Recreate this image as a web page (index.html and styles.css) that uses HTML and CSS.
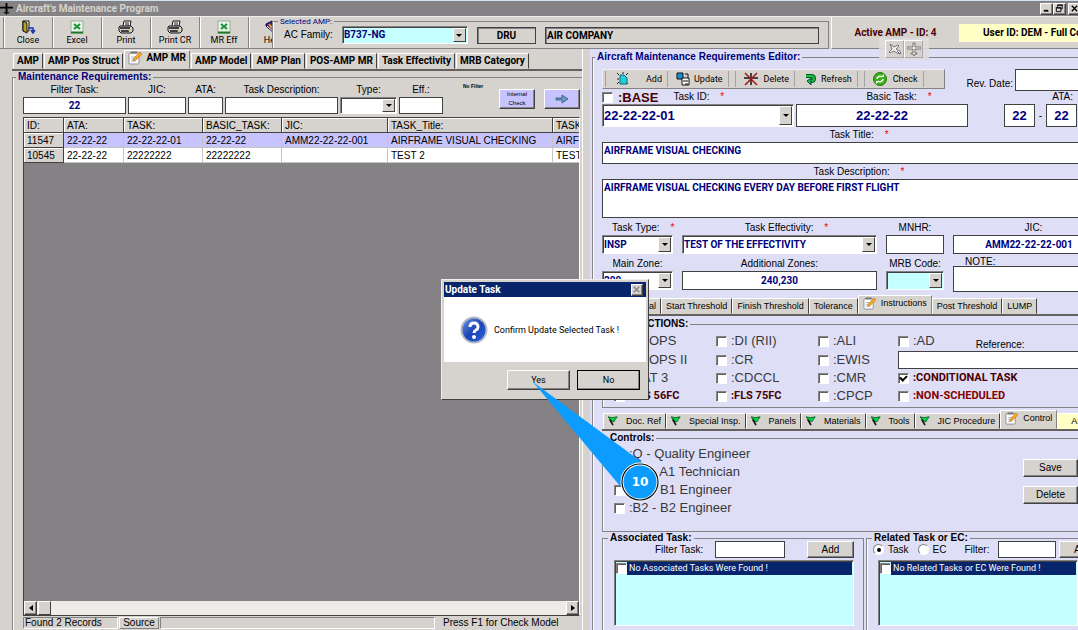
FILE: index.html
```html
<!DOCTYPE html>
<html lang="en">

<head>
  <meta charset="utf-8" />
  <meta name="viewport" content="width=device-width, initial-scale=1" />
  <title>Aircraft's Maintenance Program</title>
  <link rel="stylesheet" href="styles.css">
</head>

<body>
  <!-- shared icons -->
  <svg class="sprite" aria-hidden="true">
    <symbol id="i-note" viewBox="0 0 14 14">
      <rect x="1" y="2" width="10" height="11" rx="1" fill="#fff" stroke="#8c8c94" />
      <path d="M3 2h6v-1h-6z" fill="#777" stroke="#777" />
      <path d="M3 6h5M3 8h4M3 10h5" stroke="#a8b8d8" />
      <path d="M5 10l1-3 6-6 2 2-6 6z" fill="#f7a921" stroke="#b96a10" stroke-width=".6" />
    </symbol>
    <symbol id="i-flag" viewBox="0 0 12 12">
      <path d="M0 1l5 1 6-1-2 3-2 3-3-1z" fill="#00d840" stroke="#052" />
      <path d="M2 4l4 7" stroke="#111" stroke-width="2" />
    </symbol>
    <symbol id="i-excel" viewBox="0 0 14 14">
      <rect x="1" y="1" width="12" height="12" fill="#e8f4e8" stroke="#9ab09a" />
      <path d="M1 12.500h12" stroke="#1a7a2a" stroke-width="2" />
      <path d="M4 4l6 5M10 4l-6 5" stroke="#18913a" stroke-width="2" />
    </symbol>
    <symbol id="i-print" viewBox="0 0 16 14">
      <path d="M5 6l1-5h7l-1 5" fill="#fff" stroke="#111" />
      <path d="M7 3h4M7 5h4" stroke="#111" />
      <path d="M2 6h11l2 2v3l-2 2H3l-2-2V7z" fill="#cfcfcf" stroke="#111" />
      <path d="M2 8h10M3 11h8" stroke="#111" stroke-width="1.500" />
      <path d="M10 10h2" stroke="#e0d020" />
    </symbol>
    <symbol id="i-plane" viewBox="0 0 14 14">
      <path d="M6 1h2v4h6v2H8v4h2v1H8l-1 2-1-2H4v-1h2V7H0V5h6z" />
    </symbol>
  </svg>

  <header class="titlebar">
    <svg class="app-icon" viewBox="0 0 14 14"><use href="#i-plane" /></svg>
    <h1>Aircraft's Maintenance Program</h1>
    <div class="win-btns">
      <button type="button" aria-label="Minimize"><svg viewBox="0 0 12 10"><path d="M3 7.500h5" stroke="#000" stroke-width="2" /></svg></button>
      <button type="button" aria-label="Restore"><svg viewBox="0 0 12 10"><path d="M4 1.500h5v4h-2M4 1v3M2.500 4.500h5v4h-5zM2 4h6M4 1h6" fill="none" stroke="#000" /></svg></button>
      <button type="button" aria-label="Close"><svg viewBox="0 0 12 10"><path d="M3 2l6 6M9 2l-6 6" stroke="#000" stroke-width="1.500" /></svg></button>
    </div>
  </header>

  <div class="topbar">
    <div class="tools">
      <button type="button">
        <svg viewBox="0 0 16 14"><path d="M3 1h6v10H3z" fill="#ffe" stroke="#111" /><path d="M3 1l4 2v10l-4-2z" fill="#b8a020" stroke="#111" /><path d="M8 8h5v4M11 10l2 3 2-3" fill="none" stroke="#2038a8" stroke-width="1.500" /></svg>
        Close
      </button>
      <button type="button"><svg viewBox="0 0 14 14"><use href="#i-excel" /></svg>Excel</button>
      <button type="button"><svg viewBox="0 0 16 14"><use href="#i-print" /></svg>Print</button>
      <button type="button"><svg viewBox="0 0 16 14"><use href="#i-print" /></svg>Print CR</button>
      <button type="button"><svg viewBox="0 0 14 14"><use href="#i-excel" /></svg>MR Eff</button>
      <button type="button"><svg viewBox="0 0 16 14"><path d="M1 4l6-3 7 5-5 7-8-7z" fill="#3818a0" stroke="#111" /><path d="M2 6l7 6 4-6" fill="none" stroke="#fff" /><path d="M4 4l3 4" stroke="#f0a020" stroke-width="2" /></svg>Help</button>
    </div>
    <fieldset class="selected-amp">
      <legend>Selected AMP:</legend>
      <label for="family">AC Family:</label>
      <span class="combo cyan family"><select id="family"><option>B737-NG</option></select><i></i></span>
      <output class="amp-code">DRU</output>
      <output class="amp-company">AIR COMPANY</output>
    </fieldset>
    <div class="session">
      <span class="active-amp">Active AMP - ID: 4</span>
      <span class="user">User ID: DEM - Full Control</span>
    </div>
  </div>

  <div class="float-tools">
    <button type="button" aria-label="Aircraft"><svg viewBox="0 0 14 14"><path d="M2 2l4 3 4-2 1 1-3 3 4 2 1 3-4-1-3-2-4 2-1-1 3-3z" fill="#eee" stroke="#777" /><path d="M9 9l3 3" stroke="#56a" /></svg></button>
    <button type="button" aria-label="Aircraft position"><svg viewBox="0 0 14 14" fill="#eee" stroke="#777"><use href="#i-plane" /></svg></button>
  </div>

  <main class="main">
    <section class="left">
      <nav class="tabs main-tabs">
        <a href="#">AMP</a>
        <a href="#">AMP Pos Struct</a>
        <a href="#" class="active"><svg viewBox="0 0 14 14"><use href="#i-note" /></svg>AMP MR</a>
        <a href="#">AMP Model</a>
        <a href="#">AMP Plan</a>
        <a href="#">POS-AMP MR</a>
        <a href="#">Task Effectivity</a>
        <a href="#">MRB Category</a>
      </nav>

      <fieldset class="requirements">
        <legend>Maintenance Requirements:</legend>
        <div class="filters">
          <div class="field f-task"><label for="f-task">Filter Task:</label><input id="f-task" value="22"></div>
          <div class="field f-jic"><label for="f-jic">JIC:</label><input id="f-jic"></div>
          <div class="field f-ata"><label for="f-ata">ATA:</label><input id="f-ata"></div>
          <div class="field f-desc"><label for="f-desc">Task Description:</label><input id="f-desc"></div>
          <div class="field f-type"><label for="f-type">Type:</label><span class="combo"><select id="f-type"><option></option></select><i></i></span></div>
          <div class="field f-eff"><label for="f-eff">Eff.:</label><input id="f-eff"></div>
          <span class="no-filter">No Filter</span>
          <button type="button" class="lilac">Internal Check</button>
          <button type="button" class="lilac" aria-label="Next"><svg viewBox="0 0 14 10"><path d="M1 4h6V1l6 4-6 4V6H1z" fill="#6b96c0" stroke="#44688c" /></svg></button>
        </div>

        <div class="grid">
          <div class="grid-view">
            <table>
              <thead>
                <tr><th class="c-id">ID:</th><th class="c-ata">ATA:</th><th class="c-task">TASK:</th><th class="c-task">BASIC_TASK:</th><th class="c-jic">JIC:</th><th class="c-title">TASK_Title:</th><th class="c-desc">TASK_Desc:</th></tr>
              </thead>
              <tbody>
                <tr class="selected"><th>11547</th><td>22-22-22</td><td>22-22-22-01</td><td>22-22-22</td><td>AMM22-22-22-001</td><td>AIRFRAME VISUAL CHECKING</td><td>AIRFRAME</td></tr>
                <tr><th>10545</th><td>22-22-22</td><td>22222222</td><td>22222222</td><td></td><td>TEST 2</td><td>TEST 2</td></tr>
              </tbody>
            </table>
          </div>
          <div class="hscroll">
            <button type="button" aria-label="Scroll left"><svg viewBox="0 0 6 8"><path d="M5 1v6L1 4z" /></svg></button>
            <span class="thumb"></span>
            <button type="button" aria-label="Scroll right"><svg viewBox="0 0 6 8"><path d="M1 1v6l4-3z" /></svg></button>
          </div>
        </div>

        <footer class="status">
          <span class="records">Found 2 Records</span>
          <button type="button">Source</button>
          <span class="message"></span>
          <span class="hint">Press F1 for Check Model</span>
        </footer>
      </fieldset>
    </section>

    <section class="right">
      <fieldset class="editor">
        <legend>Aircraft Maintenance Requirements Editor:</legend>

        <div class="row editor-head">
          <div class="toolbar">
            <button type="button" class="t-add"><svg viewBox="0 0 14 14"><path d="M1 1l2 2M7 0v2M12 1l-2 2M1 7h2M1 12l2-2M12 12l-2-2" stroke="#222" /><path d="M4 3h4l3 3v6H4z" fill="#20d0e0" stroke="#167" /></svg>Add</button>
            <button type="button"><svg viewBox="0 0 14 14"><path d="M1 1h6v6H1z" fill="#1890d8" stroke="#111" /><path d="M6 6h7v7H6z" fill="#fff" stroke="#111" /><path d="M9 2h3v4M7 9h5M9 12h3" fill="none" stroke="#111" /></svg>Update</button>
            <button type="button" class="group"><svg viewBox="0 0 14 14"><path d="M6 1h2v4h6v2H8v6H6V7H0V5h6z" fill="#444" /><path d="M1 1l12 12M13 1L1 13" stroke="#a01818" stroke-width="1.500" /></svg>Delete</button>
            <button type="button"><svg viewBox="0 0 14 14"><path d="M3 4h5q3 0 3 2.500t-3 2.500H7" fill="none" stroke="#053" stroke-width="4" /><path d="M3 4h5q3 0 3 2.500t-3 2.500H7" fill="none" stroke="#20c040" stroke-width="2" /><path d="M8 6v7L4 9z" fill="#20c040" stroke="#053" /></svg>Refresh</button>
            <button type="button" class="group"><svg viewBox="0 0 14 14"><circle cx="7" cy="7" r="6.500" fill="#38b018" stroke="#287810" /><path d="M4 7a3 3 0 0 1 5-2M10 7a3 3 0 0 1-5 2" fill="none" stroke="#fff" stroke-width="1.500" /><path d="M8 5h3V2zM6 9H3v3z" fill="#fff" /></svg>Check</button>
          </div>
          <label for="rev">Rev. Date:</label>
          <input id="rev" class="bleed">
        </div>

        <div class="row row-ids">
          <div class="field w-task-id">
            <div class="base-line"><label class="base"><input type="checkbox">:BASE</label><label for="task-id">Task ID: <b>*</b></label></div>
            <span class="combo big"><select id="task-id"><option>22-22-22-01</option></select><i></i></span>
          </div>
          <div class="field w-basic"><label for="basic">Basic Task: <b>*</b></label><input id="basic" class="big" value="22-22-22"></div>
          <div class="field w-ata"><label for="ata2">ATA:</label>
            <div class="ata-pair"><input class="big" aria-label="ATA chapter" value="22"><span>-</span><input id="ata2" class="big" value="22"></div>
          </div>
        </div>

        <div class="field wide"><label for="title">Task Title: <b>*</b></label><textarea id="title" class="bleed title">AIRFRAME VISUAL CHECKING</textarea></div>
        <div class="field wide"><label for="desc">Task Description: <b>*</b></label><textarea id="desc" class="bleed desc">AIRFRAME VISUAL CHECKING EVERY DAY BEFORE FIRST FLIGHT</textarea></div>

        <div class="quad">
          <div class="field type"><label for="type">Task Type: <b>*</b></label><span class="combo"><select id="type"><option>INSP</option></select><i></i></span></div>
          <div class="field effect"><label for="effect">Task Effectivity: <b>*</b></label><span class="combo"><select id="effect"><option>TEST OF THE EFFECTIVITY</option></select><i></i></span></div>
          <div class="field"><label for="mnhr">MNHR:</label><input id="mnhr"></div>
          <div class="field jic"><label for="jic">JIC:</label><input id="jic" class="bleed" value="AMM22-22-22-001"></div>
          <div class="field"><label for="zone">Main Zone:</label><span class="combo"><select id="zone"><option>200</option></select><i></i></span></div>
          <div class="field"><label for="zones">Additional Zones:</label><input id="zones" value="240,230"></div>
          <div class="field"><label for="mrb">MRB Code:</label><span class="combo cyan"><select id="mrb"><option></option></select><i></i></span></div>
          <div class="field note"><label for="note">NOTE:</label><textarea id="note" class="bleed"></textarea></div>
        </div>

        <nav class="tabs sub-tabs first">
          <a href="#">Interval</a>
          <a href="#">Start Threshold</a>
          <a href="#">Finish Threshold</a>
          <a href="#">Tolerance</a>
          <a href="#" class="active"><svg viewBox="0 0 14 14"><use href="#i-note" /></svg>Instructions</a>
          <a href="#">Post Threshold</a>
          <a href="#">LUMP</a>
        </nav>

        <fieldset class="instructions">
          <legend>INSTRUCTIONS:</legend>
          <label class="check"><input type="checkbox">:ETOPS</label>
          <label class="check"><input type="checkbox">:DI (RII)</label>
          <label class="check"><input type="checkbox">:ALI</label>
          <div class="ad"><label class="check"><input type="checkbox">:AD</label><label for="ref" class="ref-label">Reference:</label></div>
          <label class="check"><input type="checkbox">:ETOPS II</label>
          <label class="check"><input type="checkbox">:CR</label>
          <label class="check"><input type="checkbox">:EWIS</label>
          <input id="ref" class="bleed">
          <label class="check"><input type="checkbox">:CAT 3</label>
          <label class="check"><input type="checkbox">:CDCCL</label>
          <label class="check"><input type="checkbox">:CMR</label>
          <label class="check strong"><input type="checkbox" checked>:CONDITIONAL TASK</label>
          <label class="check strong"><input type="checkbox">:FLS 56FC</label>
          <label class="check strong"><input type="checkbox">:FLS 75FC</label>
          <label class="check"><input type="checkbox">:CPCP</label>
          <label class="check strong red"><input type="checkbox">:NON-SCHEDULED</label>
        </fieldset>

        <nav class="tabs sub-tabs second">
          <a href="#"><svg viewBox="0 0 12 12"><use href="#i-flag" /></svg>Doc. Ref</a>
          <a href="#"><svg viewBox="0 0 12 12"><use href="#i-flag" /></svg>Special Insp.</a>
          <a href="#"><svg viewBox="0 0 12 12"><use href="#i-flag" /></svg>Panels</a>
          <a href="#"><svg viewBox="0 0 12 12"><use href="#i-flag" /></svg>Materials</a>
          <a href="#"><svg viewBox="0 0 12 12"><use href="#i-flag" /></svg>Tools</a>
          <a href="#"><svg viewBox="0 0 12 12"><use href="#i-flag" /></svg>JIC Procedure</a>
          <a href="#" class="active"><svg viewBox="0 0 14 14"><use href="#i-note" /></svg>Control</a>
          <a href="#" class="yellow">AMP</a>
        </nav>

        <fieldset class="controls">
          <legend>Controls:</legend>
          <div class="skills">
            <label class="check"><input type="checkbox">:Q - Quality Engineer</label>
            <label class="check"><input type="checkbox">:A1 - A1 Technician</label>
            <label class="check"><input type="checkbox">:B1 - B1 Engineer</label>
            <label class="check"><input type="checkbox">:B2 - B2 Engineer</label>
          </div>
          <div class="actions">
            <button type="button">Save</button>
            <button type="button">Delete</button>
          </div>
        </fieldset>

        <div class="links">
          <fieldset class="associated">
            <legend>Associated Task:</legend>
            <div class="link-filter">
              <label for="assoc">Filter Task:</label><input id="assoc"><button type="button">Add</button>
            </div>
            <div class="list"><label><input type="checkbox"><span>No Associated Tasks Were Found !</span></label></div>
          </fieldset>
          <fieldset class="related">
            <legend>Related Task or EC:</legend>
            <div class="link-filter">
              <label class="radio"><input type="radio" name="kind" checked>Task</label>
              <label class="radio"><input type="radio" name="kind">EC</label>
              <label for="rel">Filter:</label><input id="rel"><button type="button">Add</button>
            </div>
            <div class="list"><label><input type="checkbox"><span>No Related Tasks or EC Were Found !</span></label></div>
          </fieldset>
        </div>
      </fieldset>
    </section>
  </main>

  <div class="dialog" role="dialog" aria-labelledby="dialog-title">
    <div class="dialog-title">
      <h2 id="dialog-title">Update Task</h2>
      <button type="button" aria-label="Close"><svg viewBox="0 0 10 10"><path d="M2 2l6 6M8 2l-6 6" stroke="#848284" stroke-width="1.500" /></svg></button>
    </div>
    <div class="dialog-body">
      <svg viewBox="0 0 28 28">
        <defs>
          <linearGradient id="ball" x2="1" y2="1">
            <stop stop-color="#6d96e8" />
            <stop offset=".5" stop-color="#1c45b8" />
            <stop offset="1" stop-color="#2b66dc" />
          </linearGradient>
        </defs>
        <circle cx="14" cy="14" r="12.500" fill="url(#ball)" stroke="#b4b8c4" stroke-width="2" />
        <path d="M10 11q0-4 4-4t4 4q0 2-2 3t-2 3" fill="none" stroke="#fff" stroke-width="3" />
        <circle cx="14" cy="21" r="2" fill="#fff" />
      </svg>
      <p>Confirm Update Selected Task !</p>
    </div>
    <div class="dialog-foot">
      <button type="button">Yes</button>
      <button type="button" class="default">No</button>
    </div>
  </div>

  <div class="callout">
    <svg viewBox="0 0 128 120">
      <path d="M0 0L110 81L87 104z" fill="#0c9cff" />
      <circle cx="107" cy="100" r="18" fill="#0c9cff" stroke="#fff" stroke-width="3" />
      <circle cx="107" cy="100" r="18" fill="none" stroke="#111" stroke-width="1.200" />
    </svg>
    <span>10</span>
  </div>
</body>

</html>
```
FILE: styles.css
```css
:root {
  --face: #d6d3ce;
  --panel: #dedff7;
  --dark: #424142;
  --shade: #848284;
  --navy: #00007b;
  --title: #08246b;
  --lilac: #c6c3ff;
  --cyan: #c6ffff;
  --yellow: #ffffc6;
}

* {
  box-sizing: border-box;
}

html,
body {
  height: 100%;
  margin: 0;
}

body {
  display: flex;
  flex-direction: column;
  overflow: hidden;
  position: relative;
  background: var(--face);
  color: #000;
  font: 10px/12px "Liberation Sans", Arial, sans-serif;
}

.sprite {
  position: absolute;
  width: 0;
  height: 0;
}

fieldset {
  min-width: 0;
  margin: 0;
  padding: 0;
  border: 1px solid var(--shade);
  box-shadow: inset 1px 0 #fff;
}

legend {
  padding: 0 2px;
  font-weight: bold;
  line-height: 12px;
}

input,
select,
textarea,
button {
  margin: 0;
  padding: 0;
  border-radius: 0;
  font: inherit;
  color: inherit;
}

input,
textarea {
  min-width: 0;
  border: 1px solid var(--dark);
  background: #fff;
  color: var(--navy);
  font: bold 10px/12px Roboto, sans-serif;
}

input {
  text-align: center;
}

textarea {
  display: block;
  resize: none;
  overflow: hidden;
}

.bleed {
  border-right: 0;
}

input[type="checkbox"] {
  appearance: none;
  flex: none;
  display: grid;
  place-content: center;
  width: 11px;
  height: 11px;
  border: 1px solid;
  border-color: var(--shade) #fff #fff var(--shade);
  box-shadow: inset 1px 1px #63605e;
}

input[type="checkbox"]:checked::before {
  content: "";
  width: 3px;
  height: 5px;
  margin-top: -1px;
  border: solid #000;
  border-width: 0 2px 2px 0;
  transform: rotate(45deg);
}

input[type="radio"] {
  appearance: none;
  display: grid;
  place-content: center;
  width: 11px;
  height: 11px;
  border: 1px solid;
  border-color: var(--shade) #fff #fff var(--shade);
  border-radius: 50%;
}

input[type="radio"]:checked::before {
  content: "";
  width: 4px;
  height: 4px;
  border-radius: 50%;
  background: #000;
}

button {
  border: 1px solid;
  border-color: #fff var(--dark) var(--dark) #fff;
  box-shadow: inset -1px -1px var(--shade);
  background: var(--face);
}

.combo {
  display: flex;
  height: 18px;
  padding: 1px;
  border: 1px solid;
  border-color: var(--shade) #fff #fff var(--shade);
  box-shadow: inset 1px 1px var(--dark);
  background: #fff;
}

.combo select {
  appearance: none;
  flex: 1;
  min-width: 0;
  border: 0;
  background: none;
  color: var(--navy);
  font: bold 10px/12px Roboto, sans-serif;
}

.combo i {
  display: grid;
  place-content: center;
  width: 13px;
  border: 1px solid;
  border-color: #fff var(--dark) var(--dark) #fff;
  background: var(--face);
}

.combo i::before {
  content: "";
  border: 3px solid transparent;
  border-top-color: #000;
  border-bottom: 0;
}

.combo.cyan {
  background: var(--cyan);
}

/* title bar */

.titlebar {
  flex: none;
  display: flex;
  align-items: center;
  height: 17px;
  border-top: 1px solid #cee3ef;
  border-bottom: 1px solid #efefef;
  background: var(--shade);
}

.titlebar h1 {
  flex: 1;
  margin: 0;
  padding-left: 3px;
  color: var(--face);
  font: bold 10px/14px Roboto, sans-serif;
}

.app-icon {
  width: 13px;
  height: 13px;
}

.win-btns {
  display: flex;
  margin-right: -3px;
}

.win-btns button {
  width: 13px;
  height: 12px;
}

.win-btns button:last-child {
  margin-left: 2px;
}

.win-btns svg {
  display: block;
  width: 11px;
  height: 9px;
}

/* top bar */

.topbar {
  flex: none;
  display: grid;
  grid-template-columns: 272px minmax(0, 1fr) 247px;
  height: 32px;
}

.tools {
  display: flex;
  overflow: hidden;
  padding-left: 3px;
  border-bottom: 1px solid var(--shade);
}

.tools button {
  flex: 0 0 49px;
  display: flex;
  flex-direction: column;
  align-items: center;
  justify-content: center;
  gap: 1px;
  border: 0;
  border-left: 1px solid var(--shade);
  box-shadow: inset 1px 0 #fff;
  font: 9px/11px Roboto, sans-serif;
}

.tools svg {
  width: 16px;
  height: 14px;
}

.selected-amp {
  position: relative;
  display: flex;
  align-items: center;
  gap: 0 9px;
  height: 28px;
  margin: 4px 2px 0 0;
  padding: 0 9px 0 11px;
}

.selected-amp legend {
  position: absolute;
  top: -5px;
  left: 5px;
  background: var(--face);
  color: var(--navy);
  font: 8px/10px Roboto, sans-serif;
}

.family {
  width: 126px;
}

.selected-amp output {
  height: 17px;
  border: 1px solid var(--dark);
  box-shadow: inset 1px 1px var(--shade);
  font: bold 10px/15px Roboto, sans-serif;
}

.amp-code {
  width: 59px;
  text-align: center;
}

.amp-company {
  flex: 1;
  padding-left: 1px;
}

.session {
  display: flex;
  align-items: center;
  overflow: hidden;
  border-left: 1px solid #fff;
  border-bottom: 1px solid var(--shade);
  font: bold 10px/18px Roboto, sans-serif;
}

.active-amp {
  flex: 0 0 127px;
  text-align: center;
  color: #4a0000;
}

.user {
  flex: 1;
  padding-left: 24px;
  background: var(--yellow);
  white-space: nowrap;
}

.float-tools {
  position: absolute;
  z-index: 1;
  left: 879px;
  top: 38px;
  display: flex;
  padding: 2px 6px;
  background: rgba(222, 220, 222, .9);
}

.float-tools button {
  width: 19px;
  height: 18px;
  border-color: #fff #aaa #aaa #fff;
  box-shadow: none;
}

.float-tools svg {
  display: block;
  width: 14px;
  height: 14px;
  margin: auto;
}

/* layout */

.main {
  flex: 1;
  min-height: 0;
  display: grid;
  grid-template-columns: minmax(0, 583fr) minmax(0, 488fr);
  gap: 7px;
}

.left {
  display: flex;
  flex-direction: column;
  min-height: 0;
  padding: 2px 0 0 12px;
  border-right: 1px solid #fff;
}

.right {
  overflow: hidden;
  padding: 1px 0 0 2px;
  background: var(--panel);
}

/* tabs */

.tabs {
  display: flex;
  align-items: flex-end;
  height: 20px;
  border-bottom: 2px solid #63605e;
}

.tabs a {
  display: flex;
  align-items: center;
  justify-content: center;
  height: 16px;
  padding: 0 3px;
  border: 1px solid;
  border-color: #fff var(--dark) transparent #fff;
  background: var(--face);
  color: #000;
  text-decoration: none;
  white-space: nowrap;
}

.tabs a.active {
  height: 19px;
  padding-bottom: 3px;
  border-right-color: var(--shade);
}

.main-tabs {
  gap: 1px;
  padding-left: 1px;
  font: bold 10px/12px Roboto, sans-serif;
}

.main-tabs svg {
  width: 14px;
  height: 14px;
  margin-right: 4px;
}

/* left pane */

.requirements {
  flex: 1;
  display: flex;
  flex-direction: column;
  min-height: 0;
  padding: 0 2px 0 10px;
  border-bottom: 0;
  border-right: 0;
}

.requirements legend,
.editor > legend {
  margin-left: -7px;
  color: var(--navy);
}

.field {
  display: flex;
  flex-direction: column;
  min-width: 0;
}

.field label {
  height: 13px;
  text-align: center;
  white-space: nowrap;
}

.field label b {
  padding-left: 8px;
  color: #f00000;
  font-weight: normal;
}

.filters {
  display: flex;
  gap: 2px;
  height: 34px;
  padding-top: 1px;
}

.filters .field input,
.filters .combo {
  height: 17px;
}

.f-task {
  width: 103px;
}

.f-jic {
  width: 58px;
}

.f-ata {
  width: 35px;
}

.f-desc {
  width: 113px;
}

.f-type {
  width: 57px;
}

.f-eff {
  width: 44px;
}

.no-filter {
  flex: 1;
  padding-left: 18px;
  font: bold 5px/5px "Liberation Sans", sans-serif;
}

.lilac {
  flex: 0 0 36px;
  height: 20px;
  margin: 5px 0 0 7px;
  background: var(--lilac);
  font: 6px/9px "Liberation Sans", sans-serif;
}

.lilac svg {
  display: block;
  width: 14px;
  height: 10px;
  margin: auto;
}

.grid {
  flex: 1;
  display: flex;
  flex-direction: column;
  min-height: 0;
  border: 1px solid var(--dark);
  border-right-color: #fff;
  background: var(--shade);
}

.grid-view {
  flex: 1;
  overflow: hidden;
}

.grid table {
  table-layout: fixed;
  width: 640px;
  border-collapse: separate;
  border-spacing: 0;
}

.grid th,
.grid td {
  height: 15px;
  padding: 1px 0 0 3px;
  border: solid #c6c3c6;
  border-width: 0 1px 1px 0;
  background: #fff;
  font-weight: normal;
  line-height: 13px;
  text-align: left;
  white-space: nowrap;
}

.grid th {
  border-color: var(--dark);
  box-shadow: inset 1px 1px #fff;
  background: var(--face);
}

.grid .selected td {
  background: var(--lilac);
}

.c-id {
  width: 40px;
}

.c-ata {
  width: 60px;
}

.c-task {
  width: 79px;
}

.c-jic {
  width: 106px;
}

.c-title {
  width: 165px;
}

.hscroll {
  display: flex;
  justify-content: space-between;
  height: 14px;
  background: #efebe7;
}

.hscroll button {
  width: 13px;
}

.hscroll svg {
  display: block;
  width: 6px;
  height: 8px;
  margin: auto;
}

.thumb {
  width: 13px;
  margin: 0 auto 0 1px;
  border: 1px solid;
  border-color: #fff var(--dark) var(--dark) #fff;
  background: var(--face);
}

.status {
  display: flex;
  gap: 1px;
  height: 14px;
  padding: 1px 0;
}

.status button {
  width: 40px;
  border-color: #fff var(--shade) var(--shade) #fff;
  box-shadow: none;
  line-height: 10px;
}

.records,
.message {
  width: 95px;
  padding-left: 1px;
  border: 1px solid;
  border-color: var(--shade) #fff #fff var(--shade);
  line-height: 10px;
}

.message {
  flex: 1;
}

.hint {
  flex: 0 0 144px;
  padding-left: 7px;
}

/* editor pane */

.editor {
  padding: 5px 0 0 9px;
  border-right: 0;
}

.editor > legend {
  line-height: 14px;
}

.row {
  display: flex;
}

.editor-head {
  height: 22px;
}

.editor-head > label {
  flex: 1;
  padding: 9px 2px 0 0;
  text-align: right;
  white-space: nowrap;
}

.editor-head > input {
  width: 63px;
}

.toolbar {
  display: flex;
  height: 20px;
  width: 343px;
  border: 1px solid;
  border-color: #efefef var(--shade) var(--shade) #efefef;
  background: var(--face);
}

.toolbar button {
  display: flex;
  align-items: center;
  gap: 4px;
  margin: 1px 0;
  padding: 0 5px 0 8px;
  border: 0;
  border-right: 1px solid #a5a2a5;
  box-shadow: none;
  font: 9px/12px Roboto, sans-serif;
}

.toolbar .t-add {
  gap: 16px;
  margin-left: 2px;
  padding-left: 10px;
  border-left: 1px solid #a5a2a5;
}

.toolbar .group {
  gap: 6px;
  margin-left: 6px;
  border-left: 1px solid #a5a2a5;
}

.toolbar svg {
  width: 14px;
  height: 14px;
}

.w-task-id {
  width: 192px;
}

.w-basic {
  width: 172px;
  margin-left: 2px;
}

.w-basic > label {
  padding-left: 34px;
}

.w-ata {
  width: 73px;
  margin: 0 1px 0 auto;
}

.w-ata > label {
  text-align: right;
  padding-right: 4px;
}

.base-line {
  display: flex;
  height: 13px;
}

.base-line .base {
  display: flex;
  align-items: center;
  gap: 5px;
  margin-right: 15px;
  color: #4a0000;
  font-size: 13px;
  font-weight: bold;
  line-height: 10px;
}

.row-ids .big {
  height: 23px;
}

.big,
.big select {
  font: bold 13px/16px "Liberation Sans", sans-serif;
}

.ata-pair {
  display: flex;
  align-items: center;
  justify-content: space-between;
}

.ata-pair input {
  width: 31px;
}

.wide {
  margin-top: 2px;
}

.wide label {
  padding-left: 38px;
}

.title {
  height: 22px;
}

.desc {
  height: 39px;
}

.title,
.desc {
  padding: 2px 1px;
}

.quad {
  display: grid;
  grid-template-columns: 71px 195px 58px minmax(0, 1fr);
  gap: 4px 9px;
  margin-top: 4px;
}

.quad input,
.quad .combo {
  height: 19px;
}

.type label {
  padding-left: 10px;
  text-align: left;
}

.effect label {
  padding-left: 14px;
}

.jic label {
  padding-left: 36px;
}

.jic input {
  padding-left: 26px;
}

.note label {
  height: 8px;
  padding-left: 12px;
  line-height: 8px;
  text-align: left;
}

.note textarea {
  height: 26px;
}

.sub-tabs {
  font-size: 9px;
}

.sub-tabs a {
  padding: 0 4px;
}

.sub-tabs.first {
  margin-top: 4px;
}

.sub-tabs.first a:first-child {
  width: 59px;
  justify-content: flex-end;
}

.sub-tabs.second {
  margin-top: 3px;
  padding-left: 1px;
}

.sub-tabs.first svg,
.sub-tabs.second .active svg {
  width: 13px;
  height: 13px;
  margin-right: 5px;
}

.sub-tabs.second svg {
  width: 10px;
  height: 10px;
  margin-right: 8px;
}

.tabs a.yellow {
  padding: 0 13px;
  background: var(--yellow);
}

.check {
  display: flex;
  align-items: center;
  gap: 4px;
  height: 18px;
  color: #393839;
  font-size: 13px;
  line-height: 18px;
  white-space: nowrap;
}

.check.strong {
  color: #4a0000;
  font: bold 11px/18px Roboto, sans-serif;
}

.check.red {
  color: #840000;
}

.instructions {
  display: grid;
  grid-template-columns: 102px 102px 80px minmax(0, 1fr);
  margin-top: 2px;
  padding: 2px 0 2px 11px;
  border-right: 0;
}

.instructions legend,
.controls legend,
.links legend {
  margin-left: -6px;
}

.ad {
  display: flex;
}

.ref-label {
  padding: 7px 0 0 41px;
}

.controls {
  display: flex;
  justify-content: space-between;
  height: 100px;
  margin-top: 1px;
  padding: 1px 0 0 11px;
  border-right: 0;
}

.actions {
  display: flex;
  flex-direction: column;
  gap: 9px;
  padding-top: 14px;
}

.actions button {
  width: 55px;
  height: 18px;
}

.links {
  display: grid;
  grid-template-columns: 262px minmax(0, 1fr);
  gap: 2px;
}

.links fieldset {
  height: 100px;
  padding: 0 9px 0 11px;
}

.links .related {
  padding-right: 0;
  border-right: 0;
}

.link-filter {
  display: flex;
  align-items: center;
  gap: 9px;
  height: 17px;
  margin-top: -3px;
  margin-bottom: 2px;
  white-space: nowrap;
}

.link-filter > input {
  flex: none;
  width: 70px;
  height: 17px;
}

.link-filter button {
  flex: none;
  width: 47px;
  height: 17px;
  margin-left: auto;
}

.associated .link-filter {
  gap: 12px;
  padding-left: 41px;
}

.related .link-filter {
  margin-left: -5px;
}

.related .link-filter > input {
  width: 58px;
}

.related .link-filter button {
  margin-left: -6px;
}

.radio {
  display: flex;
  align-items: center;
  gap: 4px;
}

.related label[for="rel"] {
  margin-left: 9px;
}

.list {
  height: 66px;
  border: 1px solid;
  border-color: var(--shade) #fff #fff var(--shade);
  box-shadow: inset 1px 1px var(--dark);
  padding: 1px;
  background: var(--cyan);
}

.list label {
  display: flex;
  align-items: center;
  height: 13px;
  color: #fff;
  font: 9px/13px Roboto, sans-serif;
}

.list span {
  flex: 1;
  padding-left: 2px;
  background: var(--title);
}

/* confirm dialog */

.dialog {
  position: absolute;
  z-index: 2;
  left: 441px;
  top: 279px;
  width: 208px;
  padding: 2px;
  border: 1px solid;
  border-color: #efefef var(--dark) var(--dark) #efefef;
  background: var(--face);
  font: 9px/12px Roboto, sans-serif;
}

.dialog-title {
  display: flex;
  align-items: center;
  height: 15px;
  padding: 0 3px 0 1px;
  background: var(--title);
}

.dialog-title h2 {
  flex: 1;
  margin: 0;
  color: #fff;
  font: bold 10px/14px Roboto, sans-serif;
}

.dialog-title button {
  width: 12px;
  height: 12px;
}

.dialog-title svg {
  display: block;
  width: 9px;
  height: 9px;
}

.dialog-body {
  display: flex;
  align-items: center;
  gap: 6px;
  height: 65px;
  padding-left: 16px;
  background: #fff;
}

.dialog-body svg {
  width: 28px;
  height: 28px;
}

.dialog-body p {
  margin: 0;
}

.dialog-foot {
  display: flex;
  justify-content: flex-end;
  gap: 7px;
  padding: 8px 6px 7px;
}

.dialog-foot button {
  width: 63px;
  height: 20px;
}

.dialog-foot .default {
  outline: 1px solid #000;
  outline-offset: -1px;
}

/* step marker */

.callout {
  position: absolute;
  z-index: 3;
  left: 533px;
  top: 382px;
  width: 128px;
  height: 120px;
  pointer-events: none;
}

.callout svg {
  display: block;
  width: 128px;
  height: 120px;
}

.callout span {
  position: absolute;
  right: 3px;
  bottom: 2px;
  width: 36px;
  color: #fff;
  font: bold 12px/36px "DejaVu Sans", sans-serif;
  text-align: center;
}
```
